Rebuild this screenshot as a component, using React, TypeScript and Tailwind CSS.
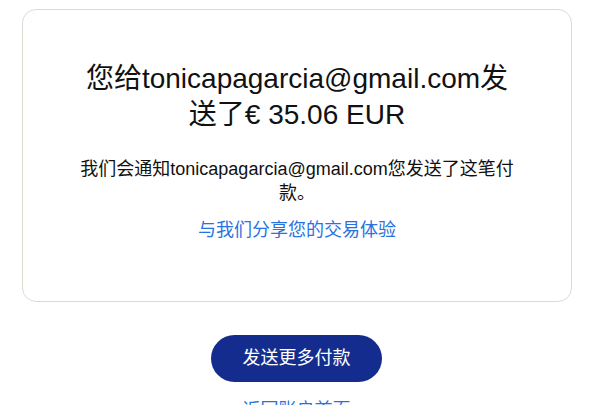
import React from 'react'

const font = { fontFamily: '"Liberation Sans", "Noto Sans CJK SC", sans-serif' }

const App = () => {
  return (
    <div className="min-h-screen bg-white text-[#111111]" style={font}>
      {/** Confirmation card */}
      <div className="ml-[22px] mt-[9px] w-[550px] rounded-[14px] border border-[#dcdad3] px-4 pt-[51px] pb-[59px]">
        <div className="mx-auto w-[446px] text-center">
          <h1 className="text-[28px] leading-[36px] font-normal">
            您给tonicapagarcia@gmail.com发送了€ 35.06 EUR
          </h1>
          <p className="mt-6 text-[18px] leading-6">
            我们会通知tonicapagarcia@gmail.com您发送了这笔付款。
          </p>
          <a href="#" className="mt-[13px] block text-[18px] leading-6 text-[#2a72e0]">
            与我们分享您的交易体验
          </a>
        </div>
      </div>

      {/** Actions */}
      <div className="mt-[33px] flex flex-col items-center">
        <button className="ml-[-15px] h-[47px] w-[171px] rounded-full bg-[#142c8e] text-[18px] text-white">
          发送更多付款
        </button>
        <a href="#" className="ml-[-15px] mt-4 text-[18px] leading-6 text-[#2a72e0]">
          返回账户首页
        </a>
      </div>
    </div>
  )
}

export default App
